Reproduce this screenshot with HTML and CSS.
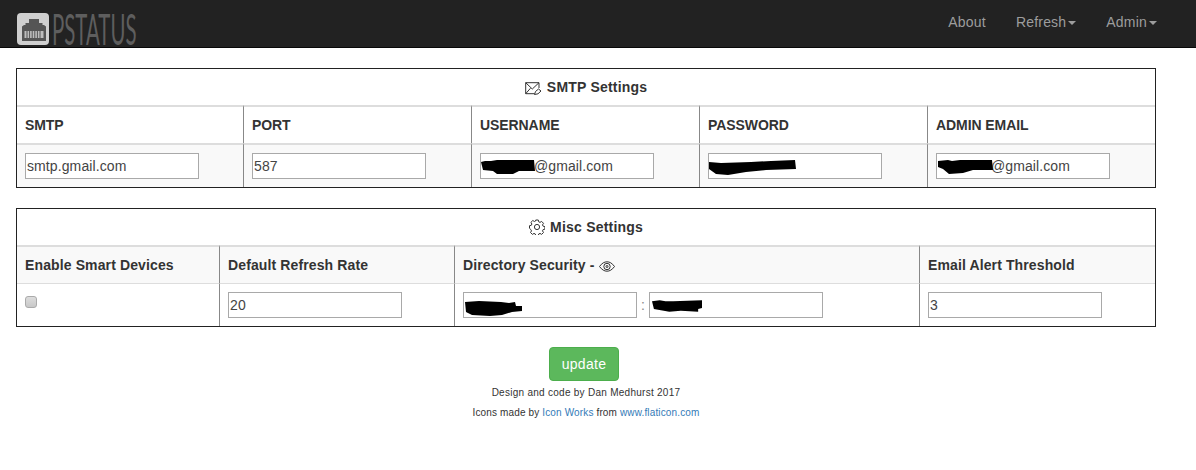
FILE: index.html
```html
<!DOCTYPE html>
<html lang="en">
<head>
<meta charset="utf-8">
<title>PStatus</title>
<link rel="stylesheet" href="styles.css">
</head>
<body>
<nav class="navbar">
  <a class="brand" href="#">
    <svg class="brand-icon" width="32" height="32" viewBox="0 0 32 32">
      <rect width="32" height="32" rx="4" fill="#cfcfcf"/>
      <path d="M5 28V13.500L7 12H8.500V10H12V6H22V10H25.500V12H27L29 13.500V28Z" fill="#555"/>
      <path d="M7.500 18h19v7h-19z" fill="#bdbdbd"/>
      <path d="M10 18v7M12.600 18v7M15.200 18v7M17.800 18v7M20.400 18v7M23 18v7" stroke="#555" stroke-width="1"/>
    </svg>
    <span class="brand-box"><span class="brand-text">PSTATUS</span></span>
  </a>
  <ul class="nav">
    <li><a href="#">About</a></li>
    <li><a href="#">Refresh<span class="caret"></span></a></li>
    <li><a href="#">Admin<span class="caret"></span></a></li>
  </ul>
</nav>
<main class="main">
  <table class="settings smtp">
    <colgroup><col class="c226"><col class="c228"><col class="c228"><col class="c228"><col></colgroup>
    <thead>
      <tr class="title"><th colspan="5">
        <svg class="icon" width="17" height="13" viewBox="0 0 17 13" fill="none" stroke="#333" stroke-width="1">
          <path d="M14 6V.7H.7v11h9"/><path d="M.7.7l6.600 6.300L14 .7"/><path d="M.7 11.700l4.800-5.500"/>
          <path d="M9.500 12.500l1-3 3-2.500 2.500 2-3 2.800z" fill="#fff"/>
        </svg>
        SMTP Settings</th></tr>
      <tr class="head"><th>SMTP</th><th>PORT</th><th>USERNAME</th><th>PASSWORD</th><th>ADMIN EMAIL</th></tr>
    </thead>
    <tbody>
      <tr>
        <td><input class="field" type="text" value="smtp.gmail.com"></td>
        <td><input class="field" type="text" value="587"></td>
        <td><span class="masked"><input class="field pad-user" type="text" value="@gmail.com">
          <svg class="scribble user" width="54" height="15" viewBox="0 0 54 15"><path d="M0 3l4-1 6 0 6-1h37l1 11-16 0-6 3H16l-4-3-10-1z"/></svg></span></td>
        <td><span class="masked"><input class="field" type="text" value="">
          <svg class="scribble pass" width="88" height="17" viewBox="0 0 88 17"><path d="M0 3l12 1 30-1 20-1 24-1 1 9-30 1-20 2-18 3-12-1-7-5z"/></svg></span></td>
        <td><span class="masked"><input class="field pad-admin" type="text" value="@gmail.com">
          <svg class="scribble admin" width="55" height="16" viewBox="0 0 55 16"><path d="M0 3l10-1 4 1 8-1 32 0 1 10-20 0-10 3-14 1-6-5-5-2z"/></svg></span></td>
      </tr>
    </tbody>
  </table>

  <table class="settings misc">
    <colgroup><col class="c202"><col class="c235"><col class="c465"><col></colgroup>
    <thead>
      <tr class="title"><th colspan="4">
        <svg class="icon" width="16" height="16" viewBox="0 0 16 16" fill="none" stroke="#333" stroke-width="1">
          <path d="M6.700 1h2.600l.4 1.800 1.300.6 1.600-1 1.900 1.900-1 1.600.6 1.300 1.800.4v2.600l-1.800.4-.6 1.300 1 1.600-1.900 1.900-1.600-1-1.300.6-.4 1.800H6.700l-.4-1.800-1.300-.6-1.600 1-1.900-1.900 1-1.600-.6-1.300L.5 9.300V6.700l1.800-.4.600-1.300-1-1.600 1.900-1.900 1.600 1 1.300-.6z"/>
          <circle cx="8" cy="8" r="2.600"/>
        </svg>
        Misc Settings</th></tr>
      <tr class="head"><th>Enable Smart Devices</th><th>Default Refresh Rate</th>
        <th>Directory Security -
          <svg class="eye" width="16" height="11" viewBox="0 0 16 11" fill="none" stroke="#333" stroke-width="1">
            <path d="M.5 5.500C3 2 5.500.8 8 .8s5 1.200 7.500 4.700C13 9 10.500 10.200 8 10.200S3 9 .5 5.500z"/>
            <circle cx="8" cy="5.500" r="3.200"/><circle cx="8" cy="5.500" r="1"/>
          </svg></th>
        <th>Email Alert Threshold</th></tr>
    </thead>
    <tbody>
      <tr>
        <td class="check-cell"><input class="check" type="checkbox"></td>
        <td><input class="field" type="text" value="20"></td>
        <td>
          <span class="masked"><input class="field" type="text" value="">
            <svg class="scribble dir1" width="58" height="17" viewBox="0 0 58 17"><path d="M0 2l14-1 22 1 8 1 6-1 1 4 6 0v5l-10 1-10 3-12 1-18-1-6-3z"/></svg></span>
          <span class="sep">:</span>
          <span class="masked"><input class="field" type="text" value="">
            <svg class="scribble dir2" width="50" height="14" viewBox="0 0 52 14"><path d="M0 2l8-1 6 1 8 0 30-1v8l-4 1 0 3-18-1-12 1-16-3z"/></svg></span>
        </td>
        <td><input class="field" type="text" value="3"></td>
      </tr>
    </tbody>
  </table>

  <div class="actions">
    <button class="btn" type="button">update</button>
    <p class="credit first">Design and code by Dan Medhurst 2017</p>
    <p class="credit second">Icons made by <a href="#">Icon Works</a> from <a href="#">www.flaticon.com</a></p>
  </div>
</main>
</body>
</html>
```
FILE: styles.css
```css
* { box-sizing: border-box; }
html, body { margin: 0; padding: 0; }
body {
  background: #fff;
  color: #333;
  font-family: "Liberation Sans", Arial, sans-serif;
  font-size: 14px;
  line-height: 20px;
}
a { color: #337ab7; text-decoration: none; }

.navbar {
  height: 48px;
  background: #222;
  border-bottom: 1px solid #080808;
  display: flex;
  justify-content: space-between;
  align-items: flex-start;
  padding: 0 24px 0 17px;
}
.brand { display: flex; align-items: flex-start; padding-top: 13px; gap: 3px; }
.brand-icon { display: block; flex: none; }
.brand-box { display: block; width: 84px; height: 32px; }
.brand-text {
  display: inline-block;
  font-family: "Lato", sans-serif;
  font-weight: 400;
  font-size: 43px;
  line-height: 32px;
  color: #5e5e5e;
  transform-origin: left top;
  transform: scaleX(0.475);
  white-space: nowrap;
}
.nav { list-style: none; margin: 0; padding: 0; display: flex; }
.nav a { display: block; padding: 12px 15px 15px; color: #9d9d9d; letter-spacing: .2px; }
.caret {
  display: inline-block;
  width: 0; height: 0;
  margin-left: 2px;
  vertical-align: middle;
  border-top: 4px solid #9d9d9d;
  border-left: 4px solid transparent;
  border-right: 4px solid transparent;
}

.main { padding: 20px 16px 0; width: 1172px; }
.settings {
  width: 1140px;
  table-layout: fixed;
  border-collapse: separate;
  border-spacing: 0;
  border: 1px solid #222;
  margin-bottom: 20px;
}
.c226 { width: 226px; }
.c228 { width: 228px; }
.c202 { width: 202px; }
.c235 { width: 235px; }
.c465 { width: 465px; }

.settings th, .settings td { padding: 8px; text-align: left; vertical-align: middle; }
.settings th { font-weight: 700; }
.smtp .head th { letter-spacing: -.08px; }
.misc .head th { letter-spacing: .12px; }
.title th { height: 36px; text-align: center; padding: 0; }
.settings .title th { letter-spacing: .2px; }
.head th { height: 38px; border-top: 2px solid #ddd; }
.settings td { height: 42px; }
.head th + th, td + td { border-left: 1px solid #888; }
.icon { vertical-align: -3px; margin-right: 1px; }
.eye { vertical-align: -2px; }

.smtp tbody td { background: #f9f9f9; border-top: 2px solid #ddd; height: 44px; }
.misc .head th { background: #f9f9f9; }
.misc tbody td { border-top: 1px solid #ddd; height: 43px; background: #fff; }

.field {
  display: inline-block;
  width: 174px;
  height: 26px;
  padding: 1px 1px;
  border: 1px solid #a9a9a9;
  background: #fff;
  color: #444;
  font: 14px "Liberation Sans", Arial, sans-serif;
  letter-spacing: .1px;
  vertical-align: middle;
  border-radius: 0;
}
.pad-user { padding-left: 53px; }
.pad-admin { padding-left: 54px; }
.masked { position: relative; display: inline-block; vertical-align: middle; }
.scribble { position: absolute; fill: #000; }
.scribble.user { left: 1px; top: 6px; }
.scribble.pass { left: 1px; top: 6px; }
.scribble.admin { left: 2px; top: 5px; }
.scribble.dir1 { left: 2px; top: 8px; }
.scribble.dir2 { left: 3px; top: 7px; }
.sep { display: inline-block; width: 4px; color: #888; text-align: center; vertical-align: middle; }
.misc .check-cell { vertical-align: middle; padding-bottom: 14px; }
.check {
  display: block;
  margin: 0;
  width: 12px;
  height: 12px;
  appearance: none;
  background: linear-gradient(#ddd, #c8c8c8);
  border: 1px solid #aaa;
  border-radius: 3px;
}

.actions { display: flex; flex-direction: column; align-items: center; }
.btn {
  width: 70px;
  height: 34px;
  padding: 0;
  margin-right: 4px;
  background: #5cb85c;
  border: 1px solid #4cae4c;
  border-radius: 4px;
  color: #fff;
  font: 14px "Liberation Sans", Arial, sans-serif;
  letter-spacing: .3px;
}
.credit { margin: 4px 0 0; font-size: 10px; line-height: 16px; }
.credit.first { letter-spacing: .27px; }
.credit.second { letter-spacing: .14px; }
```
